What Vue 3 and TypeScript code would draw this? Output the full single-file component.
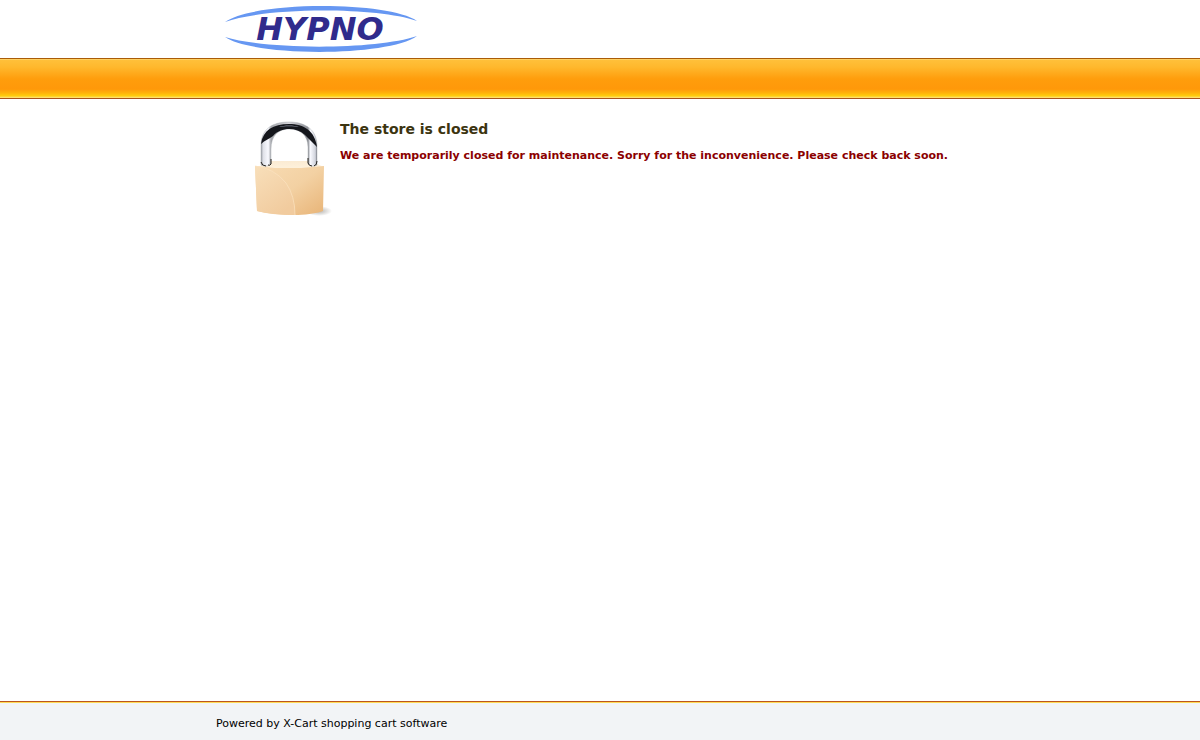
<script setup lang="ts">
interface Notice {
  title: string
  message: string
}

const notice: Notice = {
  title: 'The store is closed',
  message:
    'We are temporarily closed for maintenance. Sorry for the inconvenience. Please check back soon.',
}
</script>

<template>
  <div class="page">
    <header>
      <div class="wrap brand">
        <svg class="logo" viewBox="0 0 192 46" role="img" aria-label="HYPNO">
          <path d="M0 16C29-5 163-5 192 15C151 1 42 1 0 16Z" fill="#6697f2" />
          <path d="M0 31C29 51 163 51 192 30C151 44 42 44 0 31Z" fill="#6697f2" />
          <text class="logo-text" x="95" y="34" text-anchor="middle">HYPNO</text>
        </svg>
      </div>
      <div class="bar"></div>
    </header>

    <main class="wrap content">
      <svg class="lock" viewBox="0 0 80 100" aria-hidden="true">
        <defs>
          <linearGradient id="face" x1="0" y1="0" x2="1" y2="1">
            <stop offset="0" stop-color="#f8dcb4" />
            <stop offset="0.5" stop-color="#f3d1a3" />
            <stop offset="1" stop-color="#e8b477" />
          </linearGradient>
          <linearGradient id="sheen" x1="0" y1="0" x2="0.6" y2="1">
            <stop offset="0" stop-color="#f8dfba" />
            <stop offset="1" stop-color="#f1cb9e" />
          </linearGradient>
          <linearGradient id="top" x1="0" y1="0" x2="0" y2="1">
            <stop offset="0" stop-color="#fbebd3" />
            <stop offset="1" stop-color="#fff4df" />
          </linearGradient>
          <linearGradient id="steel" x1="0" y1="0" x2="1" y2="0">
            <stop offset="0" stop-color="#9a9da5" />
            <stop offset="0.04" stop-color="#dfe1e8" />
            <stop offset="0.13" stop-color="#f9faff" />
            <stop offset="0.18" stop-color="#a5a7ac" />
            <stop offset="0.5" stop-color="#d5d5da" />
            <stop offset="0.84" stop-color="#8a8d93" />
            <stop offset="0.88" stop-color="#f9faff" />
            <stop offset="0.97" stop-color="#d0d3dc" />
            <stop offset="1" stop-color="#777b83" />
          </linearGradient>
          <radialGradient id="shade">
            <stop offset="0" stop-color="#6c675f" stop-opacity="0.5" />
            <stop offset="1" stop-color="#6c675f" stop-opacity="0" />
          </radialGradient>
        </defs>
        <ellipse cx="66" cy="92" rx="13" ry="5" fill="url(#shade)" />
        <path d="M2 49L18 42H57L71 48L70 53H3Z" fill="url(#top)" />
        <path
          d="M8 46V27C8 10 19 3 36 3C53 3 64 11 64 27V46Q59 49 55 45V28C55 16 47 10 36 10C25 10 18 17 18 30V45Q13 49 8 46Z"
          fill="url(#steel)" stroke="#a0a3aa" stroke-width="0.4"
        />
        <path
          d="M8 25C10 11 20 5 36 5C51 5 62 12 64 28C60 24 56 20 52 16C43 8 28 8 20 17C16 20 12 21 8 25Z"
          fill="#15171c"
        />
        <path d="M26 8C31 6 41 6 46 8C41 7 31 7 26 8Z" fill="#8b91a0" />
        <path d="M18 40V45Q17 47 15 46M8 43Q9 47 13 47M55 39V44Q56 47 59 47M64 42Q64 46 61 47" fill="none" stroke="#28251f" stroke-width="1" />
        <path d="M2 47L22 49L48 49L71 47L70 92Q62 95 45 96Q20 96 4 92Z" fill="url(#face)" />
        <path d="M2 47Q21 49 33 64Q42 77 42 96Q17 96 4 92Z" fill="url(#sheen)" />
        <path d="M2 47Q21 49 33 64Q42 77 42 96" fill="none" stroke="#fae2c0" stroke-width="0.7" />
      </svg>
      <section class="notice">
        <h1>{{ notice.title }}</h1>
        <p>{{ notice.message }}</p>
      </section>
    </main>

    <footer>
      <div class="wrap">Powered by X-Cart <a href="#">shopping cart software</a></div>
    </footer>
  </div>
</template>

<style>
body {
  margin: 0;
}
</style>

<style scoped>
.page {
  display: flex;
  flex-direction: column;
  min-height: 100vh;
  background: #fff;
  color: #000;
  font: 11px/16px Verdana, "DejaVu Sans", sans-serif;
}
.wrap {
  width: 64%;
  margin: 0 auto;
}
.brand {
  box-sizing: border-box;
  padding: 6px 8px;
}
.logo {
  display: block;
  width: 194px;
  height: 46px;
}
.logo-text {
  font: italic bold 32px "DejaVu Sans", sans-serif;
  fill: #302b8c;
}
.bar {
  height: 39px;
  border-top: 1px solid #a95c08;
  border-bottom: 1px solid #a9541b;
  background: linear-gradient(#ffe08a 0, #ffc03a 1px, #ffb82d 8px, #ff9d0c 20px, #ff980a 30px, #ffb30a 34px, #ffcf0c 37px, #ffe58a 39px);
}
.content {
  flex: 1;
  display: flex;
  align-items: flex-start;
  gap: 7px;
  padding-top: 20px;
}
.lock {
  flex: none;
  width: 80px;
  height: 100px;
  margin-left: 37px;
}
h1 {
  margin: 0 0 9px;
  color: #3c3410;
  font-size: 14px;
  line-height: 20px;
}
p {
  margin: 0;
  color: #8b0000;
  font-weight: bold;
}
footer {
  padding: 14px 0 8px;
  border-top: 1px solid #bb561d;
  background: #f2f4f6;
  box-shadow: inset 0 1px #ffda55;
}
a {
  color: inherit;
  text-decoration: none;
}
</style>
